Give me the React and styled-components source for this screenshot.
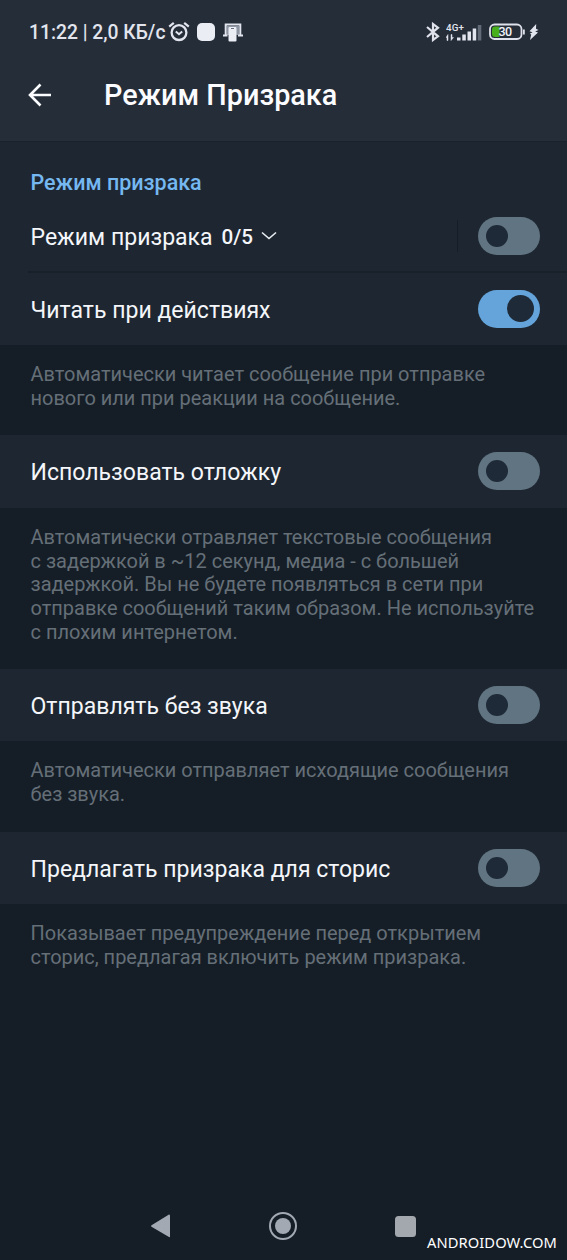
import React from "react";
import styled, { createGlobalStyle } from "styled-components";

const GlobalStyle = createGlobalStyle`
  * {
    box-sizing: border-box;
  }

  body {
    margin: 0;
    background-color: #151e26;
    font-family: Roboto, "Noto Sans", sans-serif;
  }
`;

const Screen = styled.div`
  position: relative;
  display: flex;
  flex-direction: column;
  width: 567px;
  height: 1260px;
  overflow: hidden;
  background-color: #151e26;
`;

const Header = styled.header`
  height: 142px;
  background-color: #252d39;
  border-bottom: 1px solid #19212b;
`;

const StatusBar = styled.div`
  display: flex;
  justify-content: space-between;
  height: 64px;
  padding: 0 28px 0 29px;
  color: #e2e5ee;
`;

const StatusGroup = styled.div`
  display: flex;
  align-items: center;

  svg {
    display: block;
    flex: none;
  }
`;

const Clock = styled.span`
  width: 139px;
  padding-top: 1px;
  font-size: 19.3px;
  font-weight: 500;
  white-space: nowrap;
`;

const StatusSpacer = styled.span`
  width: ${(props) => props.$size}px;
`;

const TitleBar = styled.div`
  display: flex;
  align-items: center;
  height: 62px;
  padding-left: 28px;

  svg {
    display: block;
    margin-right: 52px;
  }
`;

const Title = styled.h1`
  margin: 0 0 1px;
  color: #fbfcff;
  font-size: 28.8px;
  font-weight: 500;
  line-height: 34px;
  white-space: nowrap;
`;

const Panel = styled.section`
  flex: none;
  background-color: #1e2731;
`;

const SectionTitle = styled.h2`
  height: 59px;
  margin: 0;
  padding: 28px 0 0 30.5px;
  color: #75b7f0;
  font-size: 21.5px;
  font-weight: 500;
  line-height: 26px;
`;

const Row = styled.div`
  display: flex;
  align-items: center;
  height: ${(props) => props.$height}px;
  padding: 0 27px 0 30.5px;
`;

const RowLabel = styled.span`
  padding-top: 3px;
  color: #f4f6fa;
  font-size: 23.05px;
  line-height: 28px;
  white-space: nowrap;
`;

const Counter = styled.span`
  margin: 0 8px 0 9px;
  padding-top: 2px;
  color: #f4f6fa;
  font-size: 20.6px;
  font-weight: 500;
`;

const Divider = styled.div`
  height: 2px;
  margin-left: 28px;
  background-color: #18212a;
`;

const Separator = styled.div`
  width: 1px;
  height: 32px;
  margin: 0 20px 0 auto;
  background-color: #151d27;
`;

const Track = styled.div`
  display: flex;
  align-items: center;
  flex: none;
  justify-content: ${(props) => (props.$on ? "flex-end" : "flex-start")};
  width: 62px;
  height: 38px;
  margin: 0 0 1px ${(props) => (props.$flush ? "0" : "auto")};
  padding: 0 ${(props) => (props.$on ? "6px" : "8px")};
  border-radius: 19px;
  background-color: ${(props) => (props.$on ? "#64a4da" : "#617482")};
`;

const Thumb = styled.div`
  width: ${(props) => (props.$on ? "27px" : "22px")};
  height: ${(props) => (props.$on ? "27px" : "22px")};
  border-radius: 50%;
  background-color: #1e2a37;
`;

const Hint = styled.p`
  flex: none;
  height: ${(props) => props.$height}px;
  margin: 0;
  padding: 18px 0 0 30.5px;
  color: #656f78;
  font-size: 19.98px;
  line-height: 23.7px;
  white-space: pre-line;
`;

const NavBar = styled.nav`
  display: flex;
  align-items: center;
  height: 68px;
  margin-top: auto;
  padding-left: 150px;

  svg {
    display: block;
  }
`;

const HomeButton = styled.div`
  display: flex;
  margin: 0 98px 0 97px;
`;

const Watermark = styled.div`
  position: absolute;
  right: 10px;
  bottom: 9px;
  color: #fff;
  font-family: "Noto Sans", "DejaVu Sans", sans-serif;
  font-size: 14.7px;
  letter-spacing: 0.1px;
  line-height: 18px;
  white-space: nowrap;
`;

const AlarmIcon = () => (
  <svg width="22" height="22" viewBox="0 0 22 22" fill="none" stroke="#e2e5ee">
    <circle cx="11" cy="11.6" r="7.4" strokeWidth="2.3" />
    <path d="M7.8 10.4l3.2 2.8 3.2-2.8" strokeWidth="2" />
    <path d="M1.2 5.6L5.8 1.8M20.8 5.6l-4.6-3.8" strokeWidth="2.2" />
  </svg>
);

const SquareIcon = () => (
  <svg width="18" height="18" viewBox="0 0 18 18">
    <rect width="18" height="18" rx="5" fill="#ebedf5" />
  </svg>
);

const DevicesIcon = () => (
  <svg width="20" height="19" viewBox="0 0 20 19">
    <path d="M2.7 12.5V1.5h14.6v11" fill="none" stroke="#e2e5ee" strokeWidth="2" />
    <path d="M4 3h12v9H4z" fill="#8d94a2" />
    <path d="M0 11.5h4.5v2H0zM15 11.5h5v2h-5z" fill="#e2e5ee" />
    <rect x="5.5" y="4" width="8" height="14.5" rx="1" fill="#eceef5" />
    <path d="M8 5.5h3" stroke="#687080" />
  </svg>
);

const BluetoothIcon = () => (
  <svg width="14" height="20" viewBox="0 0 14 20" fill="none" stroke="#dfe2eb" strokeWidth="2.2">
    <path d="M1 5l11 9.3L7 18V2l5 3.7L1 15" />
  </svg>
);

const SignalIcon = () => (
  <svg width="36" height="20" viewBox="0 0 36 20" fill="#e2e5ee">
    <text x="0" y="9" fontFamily="Roboto, sans-serif" fontSize="9.8" fontWeight="500" textLength="18">
      4G+
    </text>
    <path d="M2 12.5v6H1v-3H0zM5 18.5v-6h1v3h1.5z" stroke="#e2e5ee" strokeWidth=".5" />
    <rect x="11" y="15.5" width="3.5" height="3" />
    <rect x="16.3" y="12.5" width="3.5" height="6" />
    <rect x="21.5" y="9.5" width="3.5" height="9" />
    <rect x="26.7" y="6.5" width="3.5" height="12" />
    <rect x="31.8" y="3" width="3.5" height="15.5" fill="#626a77" />
  </svg>
);

const BatteryIcon = () => (
  <svg width="36" height="18" viewBox="0 0 36 18">
    <rect x="1" y="1.5" width="31.5" height="14.5" rx="4.5" fill="none" stroke="#dfe2eb" strokeWidth="1.8" />
    <path d="M6 3.5h4.5V14H6q-3 0-3-3V6.5q0-3 3-3z" fill="#47ae1c" />
    <path d="M34.9 6.5v5" stroke="#dfe2eb" strokeWidth="1.8" />
    <text x="9.5" y="13.2" fill="#f2f4f8" fontFamily="Roboto, sans-serif" fontSize="12.5" fontWeight="500" textLength="13.5">
      30
    </text>
  </svg>
);

const BoltIcon = () => (
  <svg width="10" height="16" viewBox="0 0 10 16">
    <path d="M7.2 0L.5 7.2l3 1-2.7 1.6 1.4.8L1 16l8-7.5-2.8-1L9.5 6 7 4.8z" fill="#e2e5ee" />
  </svg>
);

const BackIcon = () => (
  <svg width="24" height="24" viewBox="0 0 24 24" fill="none" stroke="#fbfcff" strokeWidth="2.6">
    <path d="M23 12H3M12.5 1.5L2 12l10.5 10.5" />
  </svg>
);

const ChevronIcon = () => (
  <svg width="16" height="10" viewBox="0 0 16 10" fill="none" stroke="#e9edf2" strokeWidth="1.6">
    <path d="M1 1.5l7 6 7-6" />
  </svg>
);

const Switch = ({ on, flush }) => (
  <Track $on={on} $flush={flush}>
    <Thumb $on={on} />
  </Track>
);

const SettingRow = ({ label, on, height = 72 }) => (
  <Row $height={height}>
    <RowLabel>{label}</RowLabel>
    <Switch on={on} />
  </Row>
);

const App = () => {
  return (
    <>
      <GlobalStyle />
      <Screen>
        <Header>
          <StatusBar>
            <StatusGroup>
              <Clock>11:22 | 2,0 КБ/с</Clock>
              <AlarmIcon />
              <StatusSpacer $size={7} />
              <SquareIcon />
              <StatusSpacer $size={8} />
              <DevicesIcon />
            </StatusGroup>
            <StatusGroup>
              <BluetoothIcon />
              <StatusSpacer $size={6} />
              <SignalIcon />
              <StatusSpacer $size={7} />
              <BatteryIcon />
              <StatusSpacer $size={4} />
              <BoltIcon />
            </StatusGroup>
          </StatusBar>
          <TitleBar>
            <BackIcon />
            <Title>Режим Призрака</Title>
          </TitleBar>
        </Header>

        <Panel>
          <SectionTitle>Режим призрака</SectionTitle>
          <Row $height={70}>
            <RowLabel>Режим призрака</RowLabel>
            <Counter>0/5</Counter>
            <ChevronIcon />
            <Separator />
            <Switch flush />
          </Row>
          <Divider />
          <SettingRow label="Читать при действиях" on />
        </Panel>
        <Hint $height={90}>
          {"Автоматически читает сообщение при отправке\nнового или при реакции на сообщение."}
        </Hint>

        <Panel>
          <SettingRow label="Использовать отложку" height={73} />
        </Panel>
        <Hint $height={161}>
          {
            "Автоматически отравляет текстовые сообщения\nс задержкой в ~12 секунд, медиа - с большей\nзадержкой. Вы не будете появляться в сети при\nотправке сообщений таким образом. Не используйте\nс плохим интернетом."
          }
        </Hint>

        <Panel>
          <SettingRow label="Отправлять без звука" />
        </Panel>
        <Hint $height={91}>
          {"Автоматически отправляет исходящие сообщения\nбез звука."}
        </Hint>

        <Panel>
          <SettingRow label="Предлагать призрака для сторис" />
        </Panel>
        <Hint $height={90}>
          {"Показывает предупреждение перед открытием\nсторис, предлагая включить режим призрака."}
        </Hint>

        <NavBar>
          <svg width="22" height="26" viewBox="0 0 22 26" fill="#a3a9b3">
            <path d="M19 1.5q1 0 1 1v21q0 1-1 .5L1.5 13.7q-1-.7 0-1.4z" />
          </svg>
          <HomeButton>
            <svg width="28" height="28" viewBox="0 0 28 28" fill="#a3a9b3">
              <circle cx="14" cy="14" r="13" fill="none" stroke="#a3a9b3" strokeWidth="2" />
              <circle cx="14" cy="14" r="8" />
            </svg>
          </HomeButton>
          <svg width="21" height="21" viewBox="0 0 21 21" fill="#a2a8ad">
            <rect width="21" height="21" rx="3.5" />
          </svg>
        </NavBar>
        <Watermark>ANDROIDOW.COM</Watermark>
      </Screen>
    </>
  );
};

export default App;
